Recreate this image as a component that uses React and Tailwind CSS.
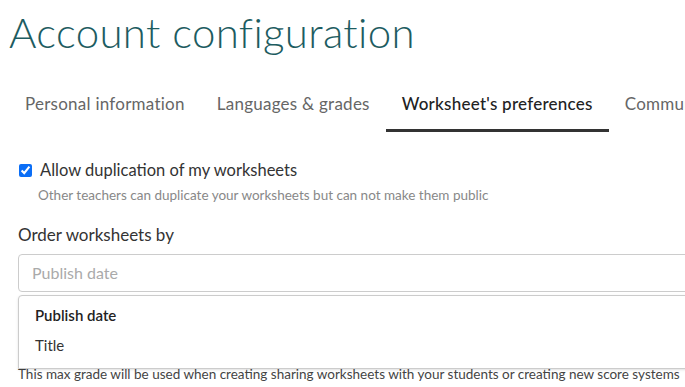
import React from "react";

const tabs = ["Personal information", "Languages & grades", "Worksheet's preferences", "Communication"];

export default function App() {
  return (
    <div className="w-[685px] h-[387px] overflow-hidden bg-white text-[#333]" style={{ fontFamily: "Lato, 'Noto Sans', sans-serif" }}>
      <div className="w-[760px] pl-[18px]">
        <h1 className="-ml-[9px] pt-[6px] text-[42px] leading-[52px] font-light text-[#1d5c61] tracking-[0.3px]">Account configuration</h1>

        <div className="mt-[26px] flex">
          {tabs.map((t, i) => (
            <div key={t} className={`shrink-0 whitespace-nowrap px-[16px] pt-[10px] pb-[15px] text-[17px] leading-[20px] tracking-[0.25px] ${i === 2 ? "text-[#222] border-b-[3px] border-[#333] font-medium" : "text-[#666] border-b-[3px] border-transparent"} ${i === 0 ? "-ml-[9px]" : ""}`}>
              {t}
            </div>
          ))}
        </div>

        <div className="mt-[28px] flex items-center gap-[8px]">
          <input type="checkbox" defaultChecked className="w-[13px] h-[13px] ml-[1px] accent-[#0b6ef6]" />
          <span className="text-[16.5px] leading-[20px] text-[#333]">Allow duplication of my worksheets</span>
        </div>
        <div className="ml-[20px] mt-[7px] text-[13.5px] leading-[16px] text-[#888]">Other teachers can duplicate your worksheets but can not make them public</div>

        <div className="mt-[21px] text-[17px] leading-[22px] text-[#333]">Order worksheets by</div>

        <div className="relative mt-[8px]">
          <div className="h-[38px] border border-[#ccc] rounded-[4px] flex items-center pl-[13px] text-[16px] text-[#aaa]">Publish date</div>
          <div className="mt-[74px] text-[13.5px] leading-[16px] text-[#444]">This max grade will be used when creating sharing worksheets with your students or creating new score systems</div>
          <div className="absolute left-0 right-0 top-[41px] h-[74px] bg-white border border-[#ccc] rounded-t-[4px] shadow-sm pt-[8px] pl-[16px] text-[15px]">
            <div className="h-[30px] font-semibold text-[#222]">Publish date</div>
            <div className="h-[30px] text-[#333]">Title</div>
          </div>
        </div>
      </div>
    </div>
  );
}
